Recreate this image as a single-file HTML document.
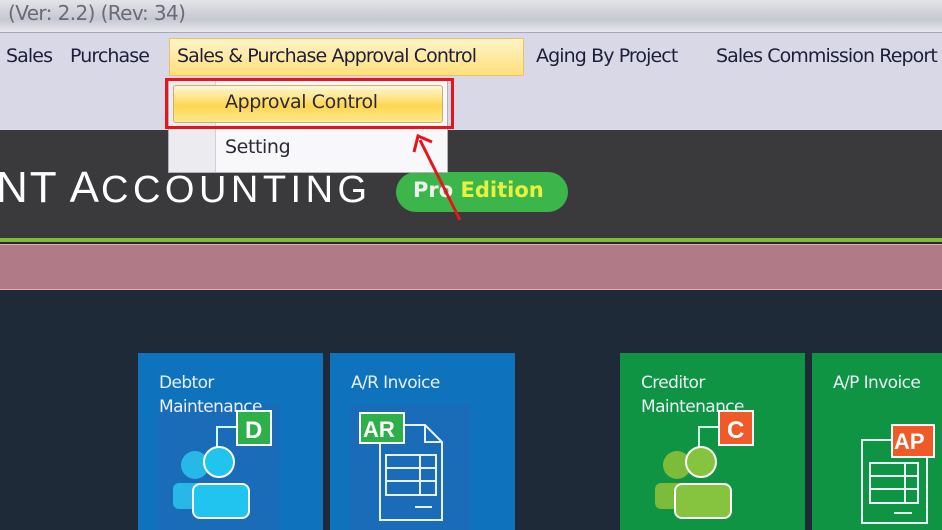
<!DOCTYPE html>
<html><head><style>
body{margin:0;width:942px;height:530px;overflow:hidden;position:relative;font-family:"DejaVu Sans","Liberation Sans",sans-serif;background:#1f2a38}
.a{position:absolute}
.menu span{position:absolute;top:45px;font-size:19px;color:#1e1e3a;letter-spacing:-0.9px;white-space:nowrap}
.tile{position:absolute;top:353px;height:177px;width:185px;overflow:hidden}
.tile .t{position:absolute;left:21px;top:18px;color:#e8f0f8;font-size:17px;line-height:24px;letter-spacing:-0.6px;z-index:2;white-space:nowrap}
</style></head><body>
<div class="a" style="left:0;top:0;width:942px;height:32px;background:linear-gradient(#e4e4e8,#c6c8d0 60%,#e8e8ee)"></div>
<div class="a" style="left:8px;top:1px;font-size:20px;color:#6a6a78;letter-spacing:-0.6px;white-space:nowrap">(Ver: 2.2) (Rev: 34)</div>
<div class="a" style="left:0;top:32px;width:942px;height:98px;background:#d8d8e6;border-top:1px solid #a8a8b4"></div>
<div class="a" style="left:169px;top:38px;width:355px;height:38px;background:linear-gradient(#fff4c8,#ffe07a);border:1px solid #f2c060;box-sizing:border-box"></div>
<div class="menu">
<span style="left:6px">Sales</span><span style="left:70px">Purchase</span>
<span style="left:177px">Sales &amp; Purchase Approval Control</span>
<span style="left:536px">Aging By Project</span><span style="left:716px">Sales Commission Report</span>
</div>
<div class="a" style="left:0;top:130px;width:942px;height:108px;background:#3a3a3c"></div>
<div class="a" style="left:-4px;top:163px;font-size:44px;color:#fff;font-family:'Liberation Sans',sans-serif;letter-spacing:2px;white-space:nowrap">NT A<span style="font-size:38px;letter-spacing:4.5px">CCOUNTING</span></div>
<div class="a" style="left:396px;top:172px;width:172px;height:40px;border-radius:20px;background:#3cb64a"></div>
<div class="a" style="left:413px;top:178px;font-size:21px;font-weight:bold;color:#f0f0f0;letter-spacing:0px;white-space:nowrap">Pro <span style="color:#e8f040">Edition</span></div>
<div class="a" style="left:0;top:238px;width:942px;height:4px;background:#7cbc3a"></div>
<div class="a" style="left:0;top:244px;width:942px;height:44px;background:#b07a86;border-top:1px solid #e9a8b4;border-bottom:1px solid #e9a8b4"></div>
<div class="a" style="left:168px;top:80px;width:280px;height:93px;background:#f8f8fa;border:1px solid #b0b0b8;box-sizing:border-box"></div>
<div class="a" style="left:169px;top:81px;width:46px;height:91px;background:#ececf0;border-right:1px solid #d0d0d8"></div>
<div class="a" style="left:173px;top:85px;width:270px;height:38px;background:linear-gradient(#fff8d8,#ffd650 55%,#ffe890);border:1px solid #c8b070;border-radius:3px;box-sizing:border-box"></div>
<div class="a" style="left:225px;top:91px;font-size:19px;color:#2a2a3a;letter-spacing:-0.4px">Approval Control</div>
<div class="a" style="left:225px;top:136px;font-size:19px;color:#2a2a3a;letter-spacing:-0.4px">Setting</div>
<div class="a" style="left:165px;top:78px;width:289px;height:51px;border:3px solid #e8141c;box-sizing:border-box"></div>
<svg class="a" style="left:410px;top:130px" width="60" height="95"><line x1="50" y1="90" x2="10" y2="10" stroke="#e8141c" stroke-width="3"/><path d="M4 22 L8 6 L22 12" fill="none" stroke="#e8141c" stroke-width="3"/></svg>
<div class="tile" style="left:138px;background:#0e72bd"><div class="t">Debtor<br>Maintenance</div>
<svg class="a" style="left:21px;top:52px" width="120" height="125"><rect width="120" height="125" fill="#1a6cb8"/><path d="M58 46V22H78" stroke="#cfe" fill="none" stroke-width="2"/><rect x="78" y="6" width="34" height="34" fill="#2db04a" stroke="#fff" stroke-width="2"/><text x="86" y="33" font-size="24" font-weight="bold" fill="#fff" font-family="Liberation Sans">D</text><circle cx="36" cy="60" r="14" fill="#27b8e8"/><rect x="14" y="78" width="40" height="26" rx="6" fill="#27b8e8"/><circle cx="60" cy="57" r="15" fill="#20c4ee" stroke="#fff" stroke-width="2"/><rect x="34" y="79" width="56" height="34" rx="7" fill="#20c4ee" stroke="#fff" stroke-width="2"/></svg></div>
<div class="tile" style="left:330px;background:#0e72bd"><div class="t">A/R Invoice</div>
<svg class="a" style="left:20px;top:52px" width="120" height="125"><rect width="120" height="125" fill="#1a6cb8"/><path d="M30 20H75L92 37V115H30Z" fill="none" stroke="#e8f0f8" stroke-width="2"/><path d="M75 20V37H92" fill="none" stroke="#e8f0f8" stroke-width="2"/><rect x="36" y="50" width="50" height="40" fill="none" stroke="#e8f0f8" stroke-width="2"/><path d="M36 63H86M36 76H86M70 50V90M65 102H82" stroke="#e8f0f8" stroke-width="2"/><rect x="10" y="8" width="44" height="30" fill="#2db04a" stroke="#fff" stroke-width="2"/><text x="13" y="32" font-size="22" font-weight="bold" fill="#fff" font-family="Liberation Sans">AR</text></svg></div>
<div class="tile" style="left:620px;background:#0f9444"><div class="t">Creditor<br>Maintenance</div>
<svg class="a" style="left:21px;top:52px" width="120" height="125"><path d="M58 46V22H78" stroke="#cfe" fill="none" stroke-width="2"/><rect x="78" y="6" width="34" height="34" fill="#f05a28" stroke="#fff" stroke-width="2"/><text x="86" y="33" font-size="24" font-weight="bold" fill="#fff" font-family="Liberation Sans">C</text><circle cx="36" cy="60" r="14" fill="#7cbc3a"/><rect x="14" y="78" width="40" height="26" rx="6" fill="#7cbc3a"/><circle cx="60" cy="57" r="15" fill="#86c440" stroke="#fff" stroke-width="2"/><rect x="34" y="79" width="56" height="34" rx="7" fill="#86c440" stroke="#fff" stroke-width="2"/></svg></div>
<div class="tile" style="left:812px;width:130px;background:#0f9444"><div class="t">A/P Invoice</div>
<svg class="a" style="left:40px;top:52px" width="90" height="125"><path d="M10 35H75V118H10Z" fill="none" stroke="#e8f0f8" stroke-width="2"/><rect x="18" y="58" width="48" height="40" fill="none" stroke="#e8f0f8" stroke-width="2"/><path d="M18 71H66M18 84H66M53 58V98M42 108H60" stroke="#e8f0f8" stroke-width="2"/><rect x="40" y="20" width="42" height="32" fill="#f05a28" stroke="#fff" stroke-width="2"/><text x="42" y="44" font-size="22" font-weight="bold" fill="#fff" font-family="Liberation Sans">AP</text></svg></div>
</body></html>
